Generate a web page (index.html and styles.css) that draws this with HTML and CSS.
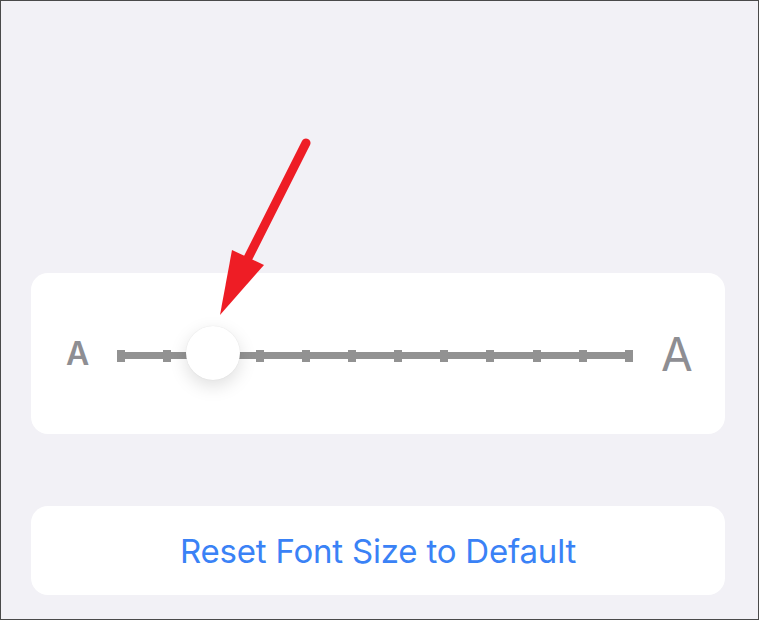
FILE: index.html
```html
<!DOCTYPE html>
<html>
<head>
<meta charset="utf-8">
<link rel="stylesheet" href="styles.css">
</head>
<body>
<div class="screen">
  <div class="card slider-card">
    <span class="a-small">A</span>
    <div class="track">
      <span class="tick"></span><span class="tick"></span><span class="tick"></span><span class="tick"></span>
      <span class="tick"></span><span class="tick"></span><span class="tick"></span><span class="tick"></span>
      <span class="tick"></span><span class="tick"></span><span class="tick"></span><span class="tick"></span>
      <span class="knob"></span>
    </div>
    <span class="a-large">A</span>
  </div>
  <div class="card reset-card">
    <span class="reset">Reset Font Size to Default</span>
  </div>
  <svg class="arrow" width="759" height="620" viewBox="0 0 759 620">
    <line x1="306" y1="143" x2="244" y2="266" stroke="#ee1d25" stroke-width="9" stroke-linecap="round"/>
    <polygon points="232,250 264,265 220,315" fill="#ee1d25"/>
  </svg>
</div>
</body>
</html>
```
FILE: styles.css
```css
html, body {
  margin: 0;
  padding: 0;
}
body {
  font-family: Inter, "Liberation Sans", sans-serif;
}
.screen {
  position: relative;
  width: 759px;
  height: 620px;
  box-sizing: border-box;
  border: 1px solid #4a4a4a;
  background: #f2f1f6;
  display: flex;
  flex-direction: column;
  padding: 272px 33px 0 30px;
  gap: 72px;
}
.card {
  background: #ffffff;
  border-radius: 17px;
}
.slider-card {
  height: 161px;
  display: flex;
  align-items: center;
  padding: 0 0 0 35px;
}
.a-small {
  font-size: 32px;
  font-weight: 600;
  color: #8e8e93;
  width: 51px;
  line-height: 1;
}
.track {
  position: relative;
  width: 516px;
  height: 12px;
  margin-top: 5px;
  display: flex;
  justify-content: space-between;
  align-items: center;
}
.track::before {
  content: "";
  position: absolute;
  left: 0;
  right: 0;
  top: 2px;
  height: 7px;
  background: #929292;
}
.tick {
  position: relative;
  width: 8px;
  height: 12px;
  background: #929292;
}
.knob {
  position: absolute;
  left: 69px;
  top: -24px;
  width: 54px;
  height: 54px;
  border-radius: 50%;
  background: #ffffff;
  box-shadow: 0 6px 18px rgba(0, 0, 0, 0.13), 0 0 1px rgba(0, 0, 0, 0.12);
}
.a-large {
  margin-left: 28px;
  font-size: 46px;
  font-weight: 400;
  color: #8e8e93;
  line-height: 1;
}
.reset-card {
  height: 89px;
  display: flex;
  align-items: center;
  justify-content: center;
}
.reset {
  font-size: 33px;
  color: #3a82f6;
  letter-spacing: -0.2px;
}
.arrow {
  position: absolute;
  left: -1px;
  top: -1px;
}
```
